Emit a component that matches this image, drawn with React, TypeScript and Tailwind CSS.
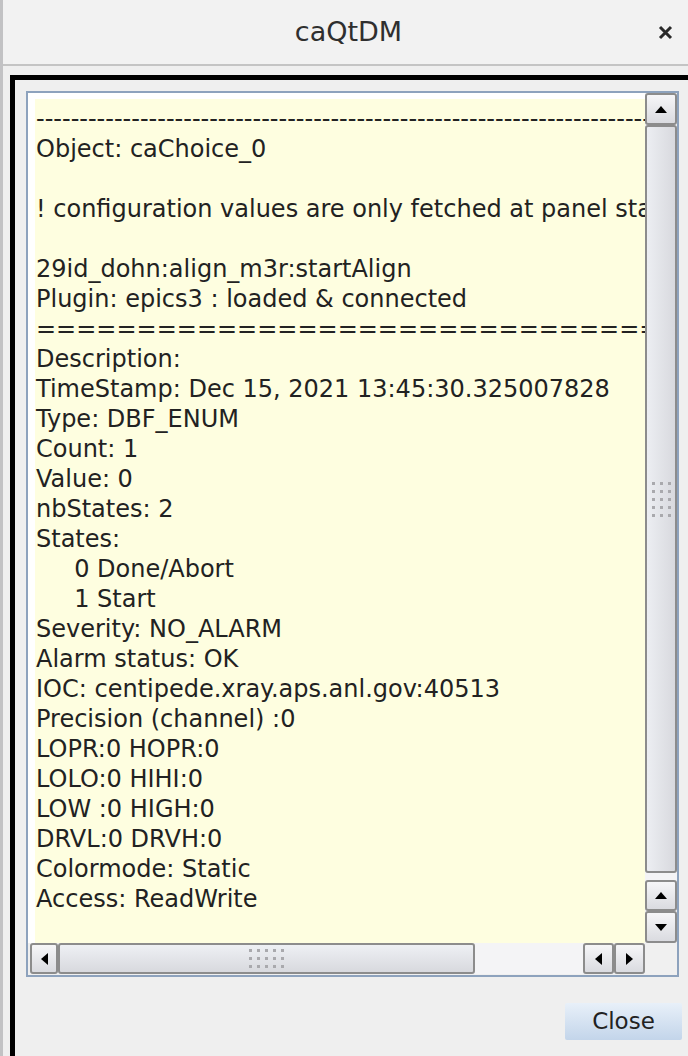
import React from 'react';

const lines = [
  '-------------------------------------------------------------------------------------',
  'Object: caChoice_0',
  '',
  '! configuration values are only fetched at panel start',
  '',
  '29id_dohn:align_m3r:startAlign',
  'Plugin: epics3 : loaded & connected',
  '=============================================================',
  'Description:',
  'TimeStamp: Dec 15, 2021 13:45:30.325007828',
  'Type: DBF_ENUM',
  'Count: 1',
  'Value: 0',
  'nbStates: 2',
  'States:',
  '     0 Done/Abort',
  '     1 Start',
  'Severity: NO_ALARM',
  'Alarm status: OK',
  'IOC: centipede.xray.aps.anl.gov:40513',
  'Precision (channel) :0',
  'LOPR:0 HOPR:0',
  'LOLO:0 HIHI:0',
  'LOW :0 HIGH:0',
  'DRVL:0 DRVH:0',
  'Colormode: Static',
  'Access: ReadWrite',
];

type Dir = 'up' | 'down' | 'left' | 'right';

function Arrow({ dir }: { dir: Dir }) {
  const pts = {
    up: '0,7 6,0 12,7',
    down: '0,0 12,0 6,7',
    left: '7,0 7,12 0,6',
    right: '0,0 0,12 7,6',
  }[dir];
  const vertical = dir === 'up' || dir === 'down';
  return (
    <svg width={vertical ? 12 : 7} height={vertical ? 7 : 12} viewBox={vertical ? '0 0 12 7' : '0 0 7 12'}>
      <polygon points={pts} fill="#000" />
    </svg>
  );
}

// one scrollbar button with the plastique-ish bevel
function SbButton({ dir, className }: { dir: Dir; className: string }) {
  return (
    <div
      className={`flex items-center justify-center rounded-[3px] border-2 border-[#8c8c8c] bg-gradient-to-b from-[#f6f6f8] to-[#dadbe0] ${className}`}
    >
      <Arrow dir={dir} />
    </div>
  );
}

function Grip({ cols, rows }: { cols: number; rows: number }) {
  return (
    <div className="grid gap-[5px]" style={{ gridTemplateColumns: `repeat(${cols}, 3px)` }}>
      {Array.from({ length: cols * rows }).map((_, i) => (
        <div key={i} className="h-[3px] w-[3px] bg-[#a9a9ad]" />
      ))}
    </div>
  );
}

export default function App() {
  return (
    <div
      className="flex h-[1056px] w-[688px] overflow-hidden bg-[#efefef]"
      style={{ fontFamily: '"DejaVu Sans", sans-serif' }}
    >
      <div className="w-[3px] shrink-0 bg-[#c2c2c4]" />
      <div className="flex flex-1 flex-col">
        {/* title bar */}
        <header className="relative flex h-[66px] shrink-0 items-center justify-center border-b-2 border-[#c4c4c4] bg-[#f2f2f2]">
          <span className="pl-[6px] text-[27px] text-[#2f2f2f]">caQtDM</span>
          <svg className="absolute right-[15px] top-[25px]" width="15" height="15" viewBox="0 0 15 15">
            <path d="M2 2 L13 13 M13 2 L2 13" stroke="#2a2a2a" strokeWidth="3" />
          </svg>
        </header>

        {/* black frame */}
        <div className="ml-[7px] mt-[9px] flex flex-1 flex-col border-l-[5px] border-t-[5px] border-black pl-[11px] pt-[11px]">
          {/* text widget */}
          <div className="flex h-[886px] w-[653px] flex-col border-2 border-[#8da2bd] bg-[#f0f0f0]">
            <div className="flex h-[850px]">
              <div className="flex-1 overflow-hidden bg-white pl-[7px] pt-[6px]">
                <div className="h-full overflow-hidden bg-[#fefee0] pl-[1px] pt-[5px] text-[24px] leading-[30px] text-[#222]">
                  {lines.map((l, i) => (
                    <div key={i} className="h-[30px] whitespace-pre">
                      {l}
                    </div>
                  ))}
                </div>
              </div>
              {/* vertical scrollbar */}
              <div className="flex w-[32px] flex-col bg-[#f4f4f6]">
                <SbButton dir="up" className="h-[32px]" />
                <div className="flex flex-1 items-center justify-center rounded-[3px] border-2 border-[#8c8c8c] bg-gradient-to-r from-[#eceef2] to-[#d8d9de]">
                  <Grip cols={3} rows={5} />
                </div>
                <div className="h-[7px]" />
                <SbButton dir="up" className="h-[31px]" />
                <SbButton dir="down" className="h-[32px]" />
              </div>
            </div>
            {/* horizontal scrollbar */}
            <div className="flex h-[31px] pl-[2px]">
              <div className="flex flex-1 bg-[#f4f4f6]">
                <SbButton dir="left" className="w-[28px]" />
                <div className="flex w-[417px] items-center justify-center rounded-[3px] border-2 border-[#8c8c8c] bg-gradient-to-b from-[#eef0f4] to-[#d8d9de]">
                  <Grip cols={5} rows={3} />
                </div>
                <div className="flex-1" />
                <SbButton dir="left" className="w-[31px]" />
                <SbButton dir="right" className="w-[31px]" />
              </div>
              <div className="w-[32px]" />
            </div>
          </div>

          <div className="flex justify-end pr-[6px] pt-[26px]">
            <button className="h-[37px] w-[117px] rounded-[2px] bg-gradient-to-b from-[#e8f0f9] to-[#c3d5ea] text-[23px] text-[#222]">
              Close
            </button>
          </div>
        </div>
      </div>
    </div>
  );
}
